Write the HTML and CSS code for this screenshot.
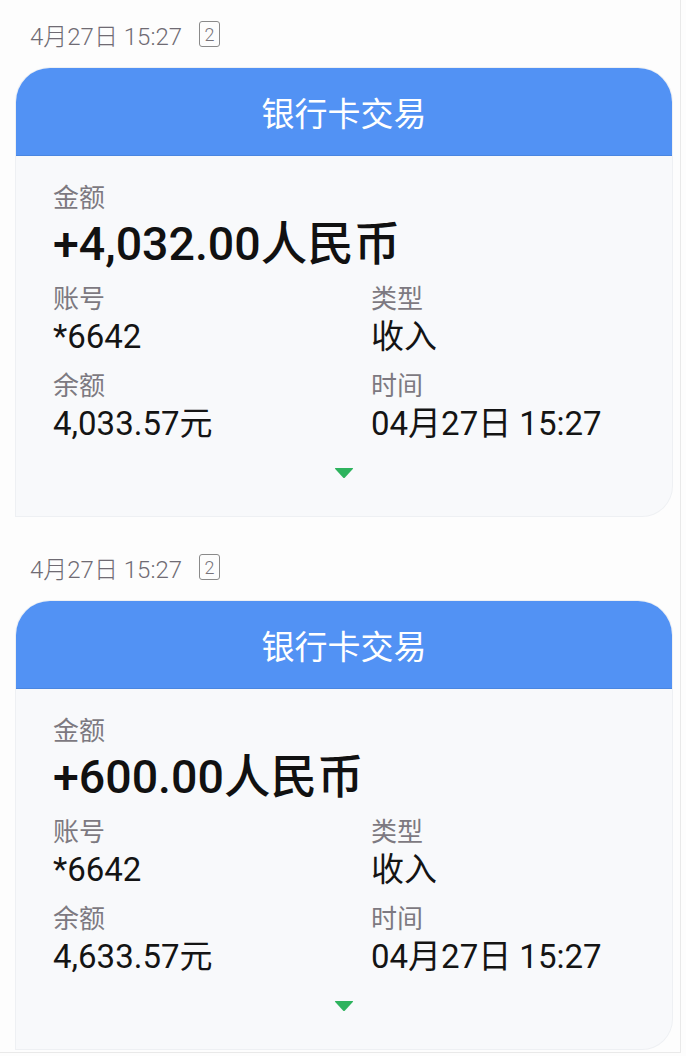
FILE: index.html
```html
<!DOCTYPE html>
<html lang="zh-CN">
<head>
    <meta charset="utf-8"/>
    <title>银行卡交易</title>
    <link rel="stylesheet" href="styles.css">
</head>
<body>
<div class="feed">

    <div class="msg">
        <div class="stamp">4月27日 15:27 <span class="sim">2</span></div>
        <div class="card">
            <div class="cardHead">银行卡交易</div>
            <div class="cardBody">
                <div class="label">金额</div>
                <div class="amount">+4,032.00人民币</div>
                <div class="fields">
                    <div>
                        <div class="label">账号</div>
                        <div class="value">*6642</div>
                    </div>
                    <div>
                        <div class="label">类型</div>
                        <div class="value">收入</div>
                    </div>
                    <div>
                        <div class="label">余额</div>
                        <div class="value">4,033.57元</div>
                    </div>
                    <div>
                        <div class="label">时间</div>
                        <div class="value">04月27日 15:27</div>
                    </div>
                </div>
                <div class="more">
                    <svg width="20" height="12" viewBox="0 0 20 12"><path d="M1.5 1 H18.5 Q19.6 1 18.8 2 L11 10.6 Q10 11.6 9 10.6 L1.2 2 Q0.4 1 1.5 1 Z" fill="#2eb35e"/></svg>
                </div>
            </div>
        </div>
    </div>

    <div class="msg">
        <div class="stamp">4月27日 15:27 <span class="sim">2</span></div>
        <div class="card">
            <div class="cardHead">银行卡交易</div>
            <div class="cardBody">
                <div class="label">金额</div>
                <div class="amount">+600.00人民币</div>
                <div class="fields">
                    <div>
                        <div class="label">账号</div>
                        <div class="value">*6642</div>
                    </div>
                    <div>
                        <div class="label">类型</div>
                        <div class="value">收入</div>
                    </div>
                    <div>
                        <div class="label">余额</div>
                        <div class="value">4,633.57元</div>
                    </div>
                    <div>
                        <div class="label">时间</div>
                        <div class="value">04月27日 15:27</div>
                    </div>
                </div>
                <div class="more">
                    <svg width="20" height="12" viewBox="0 0 20 12"><path d="M1.5 1 H18.5 Q19.6 1 18.8 2 L11 10.6 Q10 11.6 9 10.6 L1.2 2 Q0.4 1 1.5 1 Z" fill="#2eb35e"/></svg>
                </div>
            </div>
        </div>
    </div>

</div>
</body>
</html>
```

FILE: styles.css
```css
body {
    margin: 0;
    background: #fdfdfd;
    font-family: Roboto, "Noto Sans CJK SC", sans-serif;
    color: #141414;
}

.feed {
    width: 681px;
    height: 1053px;
    border-right: 1px solid #e9e9e9;
    border-bottom: 1px solid #e9e9e9;
    padding-top: 16px;
    box-sizing: border-box;
}

.msg {
    margin-bottom: 33px;
}

.stamp {
    display: flex;
    align-items: center;
    height: 36px;
    margin: 0 0 16px 30px;
    font-size: 24px;
    font-weight: 300;
    color: #6f6b73;
}

.sim {
    display: inline-flex;
    align-items: center;
    justify-content: center;
    width: 19px;
    height: 24px;
    margin-left: 17px;
    border: 1.5px solid #8a8a8a;
    border-radius: 3px;
    font-size: 18px;
    color: #77737a;
}

.card {
    width: 656px;
    margin-left: 16px;
    border-radius: 34px 34px 30px 0;
    background: #f8f9fb;
    box-shadow: 0 0 0 1px #eef0f3;
    overflow: hidden;
}

.cardHead {
    height: 88px;
    background: #5292f4;
    border-bottom: 1px solid #4a86e0;
    box-sizing: border-box;
    color: #ffffff;
    font-size: 33px;
    display: flex;
    align-items: center;
    justify-content: center;
}

.cardBody {
    padding: 25px 37px 36px;
}

.label {
    font-size: 26px;
    line-height: 34px;
    color: #7d7981;
}

.amount {
    font-size: 46.5px;
    line-height: 58px;
    font-weight: 500;
    color: #111111;
    margin-bottom: 9px;
}

.fields {
    display: grid;
    grid-template-columns: 318px auto;
    row-gap: 11px;
}

.value {
    font-size: 33px;
    line-height: 42px;
}

.more {
    display: flex;
    justify-content: center;
    margin-top: 22px;
    height: 13px;
}
```
